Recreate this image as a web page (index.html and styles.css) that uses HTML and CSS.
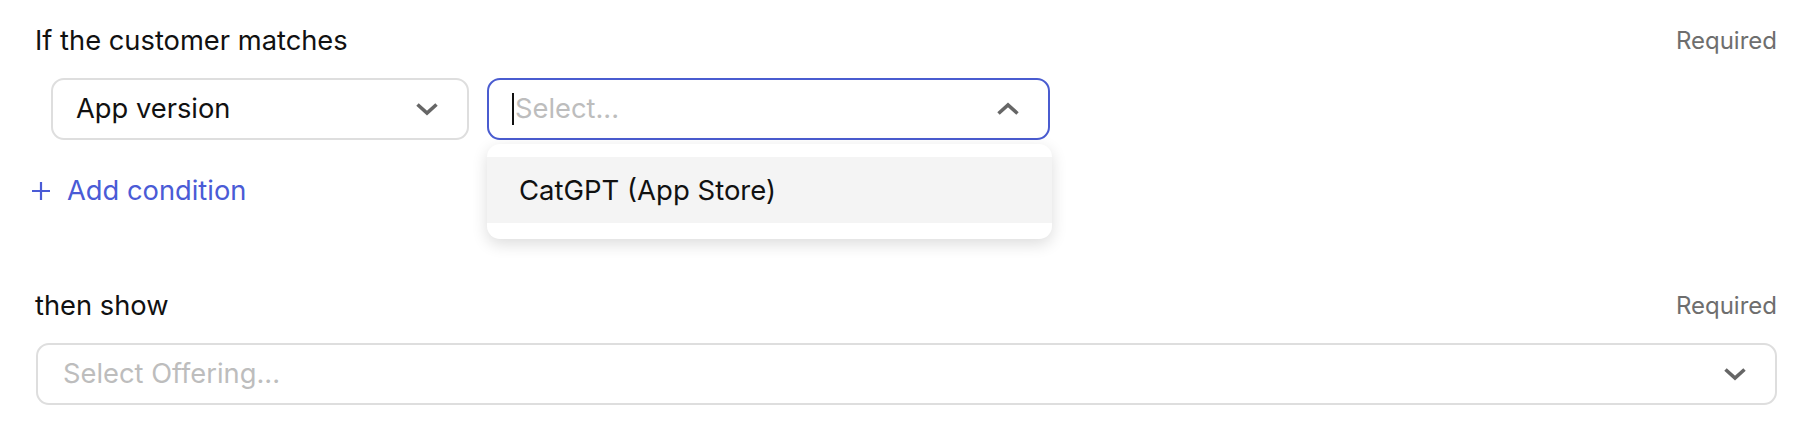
FILE: index.html
```html
<!DOCTYPE html>
<html>
<head>
<meta charset="utf-8">
<link rel="stylesheet" href="styles.css">
</head>
<body>
<div class="page">
  <div class="field-head">
    <span class="label">If the customer matches</span>
    <span class="req">Required</span>
  </div>
  <div class="cond-row">
    <div class="select sel-attr">
      <span class="value">App version</span>
      <svg class="chev" width="24" height="14" viewBox="0 0 24 14"><polyline points="2.5,2.5 12,11 21.5,2.5" fill="none" stroke="#666" stroke-width="3.6"/></svg>
    </div>
    <div class="select-wrap">
      <div class="select sel-val focused">
        <span class="caret"></span><span class="placeholder">Select...</span>
        <svg class="chev" width="24" height="14" viewBox="0 0 24 14"><polyline points="2.5,11.5 12,3 21.5,11.5" fill="none" stroke="#666" stroke-width="3.6"/></svg>
      </div>
      <div class="menu">
        <div class="option active">CatGPT (App Store)</div>
      </div>
    </div>
  </div>
  <div class="add-row">
    <svg class="plus" width="20" height="20" viewBox="0 0 20 20"><path d="M10 1v18M1 10h18" stroke="#4a5bd6" stroke-width="2.2" fill="none"/></svg>
    <span class="add-text">Add condition</span>
  </div>
  <div class="field-head second">
    <span class="label">then show</span>
    <span class="req">Required</span>
  </div>
  <div class="select sel-offer">
    <span class="placeholder">Select Offering...</span>
    <svg class="chev" width="24" height="14" viewBox="0 0 24 14"><polyline points="2.5,2.5 12,11 21.5,2.5" fill="none" stroke="#666" stroke-width="3.6"/></svg>
  </div>
</div>
</body>
</html>
```
FILE: styles.css
```css
* { box-sizing: border-box; }
html, body { margin: 0; padding: 0; background: #fff; }
body {
  font-family: "Inter", "Liberation Sans", sans-serif;
  color: #111;
}
.page {
  width: 1806px;
  height: 432px;
  padding: 26px 29px 0 35px;
  display: flex;
  flex-direction: column;
}
.field-head {
  display: flex;
  justify-content: space-between;
  align-items: center;
  height: 30px;
}
.field-head.second { margin-top: 85px; }
.label { font-size: 27.3px; line-height: 30px; color: #111; }
.req { font-size: 24px; line-height: 30px; color: #6e6e6e; }
.cond-row {
  display: flex;
  gap: 18px;
  margin-top: 22px;
  margin-left: 16px;
}
.select {
  height: 62px;
  border: 2px solid #dedede;
  border-radius: 13px;
  display: flex;
  align-items: center;
  padding: 0 28px 0 23px;
  font-size: 27.3px;
  background: #fff;
}
.select .value, .select .placeholder { position: relative; top: -1px; }
.select .chev { margin-left: auto; flex: none; }
.sel-attr { width: 418px; }
.select-wrap { position: relative; width: 563px; }
.sel-val { width: 563px; }
.focused { border-color: #4a5cd0; }
.caret {
  width: 2px;
  height: 32px;
  background: #111;
  margin-right: 1px;
  flex: none;
}
.value { color: #111; }
.placeholder { color: #bdbdbd; }
.menu {
  position: absolute;
  top: 66px;
  left: 0;
  width: 565px;
  height: 95px;
  background: #fff;
  border-radius: 13px;
  box-shadow: 0 5px 16px rgba(0,0,0,0.14);
  padding: 13px 0 16px;
  z-index: 2;
}
.option {
  height: 66px;
  display: flex;
  align-items: center;
  padding-left: 32px;
  font-size: 27.5px;
  color: #111;
}
.option.active { background: #f4f4f4; }
.add-row {
  display: flex;
  align-items: center;
  height: 30px;
  margin-top: 36px;
  margin-left: -4px;
  color: #4a5bd6;
}
.plus { margin-right: 16px; }
.add-text { font-size: 27.3px; line-height: 30px; }
.sel-offer {
  margin-top: 22px;
  margin-left: 1px;
  width: 1741px;
  padding-left: 25px;
}
```
